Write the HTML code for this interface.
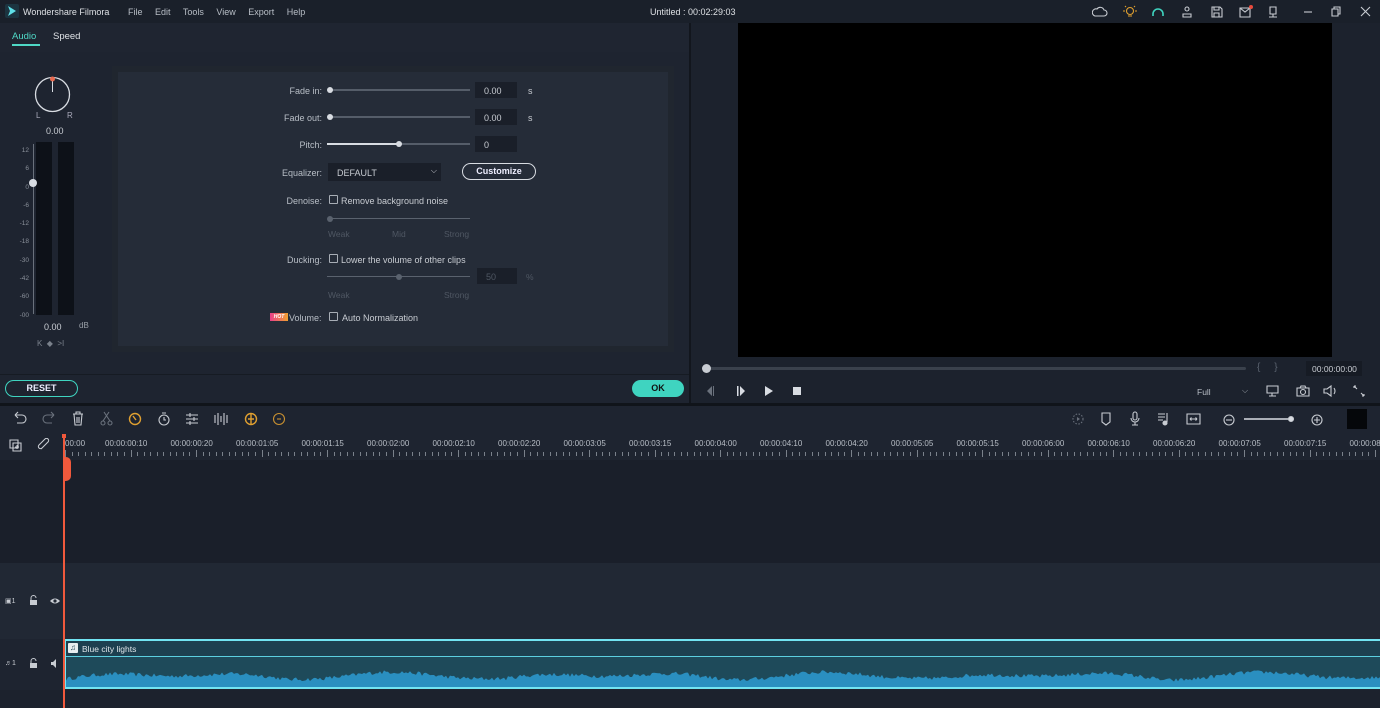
<!DOCTYPE html>
<html><head><meta charset="utf-8"><style>
*{margin:0;padding:0;box-sizing:border-box}
body{width:1380px;height:708px;overflow:hidden;background:#1c222d;font-family:"Liberation Sans",sans-serif;color:#c8ccd2;position:relative;font-size:9px}
.a{position:absolute}
.lbl{position:absolute;text-align:right;width:120px;font-size:9px;color:#b8bec6}
.trk{position:absolute;height:2px;background:#555d69}
.knob{position:absolute;width:6px;height:6px;border-radius:50%;background:#d8dce2}
.box{position:absolute;background:#1a1f29;height:16px;font-size:9px;color:#c8ccd2;padding:4px 0 0 9px}
.cb{position:absolute;width:9px;height:9px;border:1px solid #a8aeb6;border-radius:1px}
.dim{color:#4f5763}
svg{position:absolute}
</style></head><body>
<!-- title bar -->
<div class="a" style="left:0;top:0;width:1380px;height:23px;background:#1a202a"></div>
<svg style="left:5px;top:4px" width="14" height="14"><rect width="14" height="14" rx="2" fill="#1c3440"/><path d="M3 2 L11 7 L3 12 L5 7Z" fill="#5fe0e8"/></svg>
<div class="a" style="left:23px;top:7px;font-size:9px;color:#dde0e4">Wondershare Filmora</div>
<div class="a" style="left:128px;top:7px;font-size:9px;color:#b8bec6;word-spacing:10px">File Edit Tools View Export Help</div>
<div class="a" style="left:650px;top:7px;font-size:9px;color:#dde0e4">Untitled : 00:02:29:03</div>
<svg style="left:1092px;top:5px" width="290" height="14" fill="none" stroke="#c8ccd2" stroke-width="1.1">
<path d="M3 11h9a3 3 0 0 0 0-6 4 4 0 0 0-7-1 3 3 0 0 0-2 7z"/>
<g stroke="#e0a030"><circle cx="38" cy="6" r="3.5"/><path d="M36 11h4M33 6h-2M45 6h-2M34 2l-1-1M42 2l1-1"/></g>
<path stroke="#3fd4c0" stroke-width="1.6" d="M61 9a5 5 0 1 1 10 0M61 9v2M71 9v2"/>
<circle cx="95" cy="4" r="2"/><path d="M91 12v-3h8v3z"/>
<path d="M120 2h8l2 2v8h-10zM122 2v3h5V2M122 12v-4h5v4"/>
<path d="M148 3h10v9h-10zM148 3l5 4 5-4"/><circle cx="159" cy="2" r="2" fill="#e84a3c" stroke="none"/>
<path d="M178 2h6v7h-6zM181 9v3M177 12h8"/>
<path d="M212 7h8"/><path d="M240 4h6v7h-6zM242 4V2h6v7h-2"/><path d="M269 2l9 9M278 2l-9 9"/>
</svg>
<!-- left panel -->
<div class="a" style="left:0;top:23px;width:689px;height:29px;background:#1f2531"></div>
<div class="a" style="left:12px;top:31px;font-size:9.5px;color:#4fd8c6">Audio</div>
<div class="a" style="left:12px;top:44px;width:28px;height:2px;background:#4fd8c6"></div>
<div class="a" style="left:53px;top:31px;font-size:9.5px;color:#dde0e4">Speed</div>
<div class="a" style="left:0;top:52px;width:689px;height:322px;background:#1e2430"></div>
<div class="a" style="left:112px;top:66px;width:562px;height:286px;background:#20262f"></div>
<div class="a" style="left:118px;top:72px;width:550px;height:274px;background:#252c38"></div>
<!-- pan knob -->
<svg style="left:33px;top:75px" width="40" height="45"><circle cx="19.5" cy="19.5" r="17" fill="none" stroke="#d8dce2" stroke-width="1.3"/><path d="M19.5 3v14" stroke="#d8dce2"/><circle cx="19.5" cy="4" r="2.5" fill="#e86a50"/></svg>
<div class="a" style="left:36px;top:111px;font-size:8px;color:#aab">L</div>
<div class="a" style="left:67px;top:111px;font-size:8px;color:#aab">R</div>
<div class="a" style="left:46px;top:126px;font-size:9px;color:#c8ccd2">0.00</div>
<div class="a" style="left:36px;top:142px;width:16px;height:173px;background:#0d1118"></div>
<div class="a" style="left:58px;top:142px;width:16px;height:173px;background:#0d1118"></div>
<div class="a" style="left:33px;top:144px;width:1px;height:170px;background:#6a717c"></div>
<div class="a" style="left:29px;top:179px;width:8px;height:8px;border-radius:50%;background:#d8dce2"></div>
<div class="a" style="left:12px;top:142px;width:17px;font-size:6.5px;color:#8a909a;text-align:right;line-height:18.3px">12<br>6<br>0<br>-6<br>-12<br>-18<br>-30<br>-42<br>-60<br>-00</div>
<div class="a" style="left:44px;top:322px;font-size:9px">0.00</div>
<div class="a" style="left:79px;top:321px;font-size:8px;color:#9aa0a8">dB</div>
<div class="a" style="left:37px;top:339px;font-size:8px;color:#7a818b">K &nbsp;◆ &nbsp;&gt;I</div>
<!-- controls -->
<div class="lbl" style="left:202px;top:86px">Fade in:</div>
<div class="trk" style="left:329px;top:89px;width:141px"></div><div class="knob" style="left:327px;top:87px"></div>
<div class="box" style="left:475px;top:82px;width:42px">0.00</div><div class="a" style="left:528px;top:86px;font-size:9px">s</div>
<div class="lbl" style="left:202px;top:113px">Fade out:</div>
<div class="trk" style="left:329px;top:116px;width:141px"></div><div class="knob" style="left:327px;top:114px"></div>
<div class="box" style="left:475px;top:109px;width:42px">0.00</div><div class="a" style="left:528px;top:113px;font-size:9px">s</div>
<div class="lbl" style="left:202px;top:140px">Pitch:</div>
<div class="trk" style="left:327px;top:143px;width:143px"></div><div class="a" style="left:327px;top:143px;width:72px;height:2px;background:#d8dce2"></div><div class="knob" style="left:396px;top:141px"></div>
<div class="box" style="left:475px;top:136px;width:42px">0</div>
<div class="lbl" style="left:202px;top:168px">Equalizer:</div>
<div class="box" style="left:328px;top:163px;width:113px;height:18px;padding-top:5px">DEFAULT<span style="position:absolute;right:4px;top:3px;font-size:8px">⌵</span></div>
<div class="a" style="left:462px;top:163px;width:74px;height:17px;border:1.5px solid #d8dce2;border-radius:9px;font-size:9px;font-weight:bold;color:#eef;text-align:center;line-height:15px">Customize</div>
<div class="lbl" style="left:202px;top:196px">Denoise:</div>
<div class="cb" style="left:329px;top:195px"></div><div class="a" style="left:341px;top:196px;font-size:9px">Remove background noise</div>
<div class="trk" style="left:329px;top:218px;width:141px;height:1px;background:#5a626e"></div><div class="knob" style="left:327px;top:216px;background:#5a626e"></div>
<div class="a dim" style="left:328px;top:229px;font-size:8.5px">Weak</div><div class="a dim" style="left:392px;top:229px;font-size:8.5px">Mid</div><div class="a dim" style="left:444px;top:229px;font-size:8.5px">Strong</div>
<div class="lbl" style="left:202px;top:255px">Ducking:</div>
<div class="cb" style="left:329px;top:254px"></div><div class="a" style="left:341px;top:255px;font-size:9px">Lower the volume of other clips</div>
<div class="trk" style="left:327px;top:276px;width:143px;height:1px;background:#5a626e"></div><div class="knob" style="left:396px;top:274px;background:#5a626e"></div>
<div class="box dim" style="left:477px;top:268px;width:40px;color:#4f5763">50</div><div class="a dim" style="left:526px;top:272px;font-size:8.5px">%</div>
<div class="a dim" style="left:328px;top:290px;font-size:8.5px">Weak</div><div class="a dim" style="left:444px;top:290px;font-size:8.5px">Strong</div>
<div class="a" style="left:270px;top:313px;width:18px;height:8px;background:linear-gradient(90deg,#e8408a,#f0a030);font-size:5px;color:#fff;font-weight:bold;text-align:center;line-height:8px;font-style:italic">HOT</div>
<div class="a" style="left:289px;top:313px;font-size:9px;color:#b8bec6">Volume:</div>
<div class="cb" style="left:329px;top:312px"></div><div class="a" style="left:342px;top:313px;font-size:9px">Auto Normalization</div>
<!-- bottom buttons -->
<div class="a" style="left:0;top:374px;width:689px;height:29px;background:#1e2430;border-top:1px solid #161b23"></div>
<div class="a" style="left:5px;top:380px;width:73px;height:17px;border:1.5px solid #3fd4c0;border-radius:9px;font-size:9px;font-weight:bold;color:#eef;text-align:center;line-height:14px">RESET</div>
<div class="a" style="left:632px;top:380px;width:52px;height:17px;background:#3fd4c0;border-radius:9px;font-size:9px;font-weight:bold;color:#111;text-align:center;line-height:17px">OK</div>
<!-- preview -->
<div class="a" style="left:689px;top:23px;width:2px;height:380px;background:#12161d"></div>
<div class="a" style="left:691px;top:23px;width:689px;height:380px;background:#1c222d"></div>
<div class="a" style="left:738px;top:23px;width:594px;height:334px;background:#000"></div>
<div class="a" style="left:704px;top:367px;width:542px;height:3px;background:#3a414c;border-radius:2px"></div>
<div class="a" style="left:702px;top:364px;width:9px;height:9px;border-radius:50%;background:#c8ccd2"></div>
<div class="a" style="left:1257px;top:362px;font-size:10px;color:#5a626e">{ &nbsp; &nbsp; }</div>
<div class="a" style="left:1306px;top:361px;width:56px;height:15px;background:#161b24;font-size:8.5px;padding:3px 0 0 6px;color:#c8ccd2">00:00:00:00</div>
<svg style="left:704px;top:385px" width="100" height="12" fill="#d8dce2"><path d="M8 1L3 6l5 5z M9 1h1v10h-1z" fill="#6a717c"/><path d="M33 1h1.5v10H33zM36 1l5 5-5 5z"/><path d="M61 1l8 5-8 5z"/><rect x="89" y="2" width="8" height="8"/></svg>
<div class="a" style="left:1197px;top:387px;font-size:8.5px;color:#b8bec6">Full</div><div class="a" style="left:1242px;top:386px;font-size:8px;color:#9aa0a8">⌵</div>
<svg style="left:1266px;top:384px" width="104" height="14" fill="none" stroke="#c8ccd2" stroke-width="1.1"><path d="M1 2h11v7H1zM6 9v3M3 12h7"/><path d="M31 4h12v8H31zM34 4l1-2h4l1 2"/><circle cx="37" cy="8" r="2.5"/><path d="M58 5h3l4-3v10l-4-3h-3zM68 4q2 3 0 6"/><path d="M88 2l3 3M88 2h2M88 2v2M98 12l-3-3M98 12h-2M98 12v-2"/></svg>
<!-- timeline toolbar -->
<div class="a" style="left:0;top:403px;width:1380px;height:3px;background:#10141a"></div>
<div class="a" style="left:0;top:406px;width:1380px;height:28px;background:#1e2430"></div>
<svg style="left:12px;top:411px" width="280" height="16" fill="none" stroke="#c8ccd2" stroke-width="1.1">
<path d="M3 4h7a4 4 0 0 1 0 8H5M3 4l3-3M3 4l3 3"/>
<path stroke="#6a717c" d="M42 4h-7a4 4 0 0 0 0 8h5M42 4l-3-3M42 4l-3 3"/>
<path d="M61 3h10M64 3V1h4v2M62 3l1 11h6l1-11M65 6v6M67 6v6"/>
<g stroke="#6a717c"><circle cx="91" cy="12" r="2"/><circle cx="98" cy="12" r="2"/><path d="M91 10L97 1M98 10L92 1"/></g>
<g stroke="#e0a030" stroke-width="1.4"><circle cx="123" cy="8" r="5.5"/><path d="M121 5l3 4"/></g>
<circle cx="152" cy="9" r="5"/><path d="M150 2h4M152 6v3h2"/>
<path d="M174 4h12M174 8h12M174 12h12M178 2v4M182 6v4M178 10v4"/>
<path d="M203 4v8M206 2v12M209 5v6M212 2v12M215 4v8"/>
<g stroke="#e0a030" stroke-width="1.4"><circle cx="239" cy="8" r="5.5"/><path d="M239 3v10M236 8h6"/></g>
<g stroke="#c89030"><circle cx="267" cy="8" r="5.5"/><path d="M265 8h4"/></g>
</svg>
<svg style="left:1070px;top:411px" width="300" height="16" fill="none" stroke="#c8ccd2" stroke-width="1.1">
<circle cx="8" cy="8" r="5" stroke="#6a717c" stroke-dasharray="1.5 1.5"/><path d="M7 6l3 2-3 2z" fill="#6a717c" stroke="none"/>
<path d="M32 2h8v9l-4 3-4-3z"/>
<rect x="63" y="1" width="4" height="8" rx="2"/><path d="M61 7a4 4 0 0 0 8 0M65 11v3M62 14h6"/>
<path d="M88 3h7M88 6h7M88 9h5M97 2v9" /><circle cx="95" cy="12" r="2" fill="#c8ccd2"/>
<path d="M117 3h13v10h-13zM120 8h7M120 8l1.5-1.5M120 8l1.5 1.5M127 8l-1.5-1.5M127 8l-1.5 1.5"/>
<circle cx="159" cy="9" r="5"/><path d="M156 9h6"/>
<path d="M174 8h48" stroke="#d8dce2" stroke-width="1.5"/><circle cx="221" cy="8" r="2.5" fill="#d8dce2"/>
<circle cx="247" cy="9" r="5"/><path d="M244 9h6M247 6v6"/>
</svg>
<div class="a" style="left:1347px;top:409px;width:20px;height:20px;background:#05070a"></div>
<!-- ruler -->
<div class="a" style="left:0;top:434px;width:1380px;height:26px;background:#1e2430"></div>
<svg style="left:9px;top:438px" width="45" height="14" fill="none" stroke="#c8ccd2" stroke-width="1.1"><path d="M1 2h8v8H1zM4 5h8v8H4zM8 7v4M6 9h4"/><path d="M32 11l7-7a2 2 0 0 0-3-3l-6 6a2 2 0 0 0 3 3l5-5"/></svg>
<div id="ruler"></div>
<!-- tracks -->
<div class="a" style="left:0;top:460px;width:1380px;height:103px;background:#1a1f2a"></div>
<div class="a" style="left:0;top:563px;width:1380px;height:76px;background:#212834"></div>
<div class="a" style="left:0;top:639px;width:1380px;height:69px;background:#1e2430"></div>
<div class="a" style="left:0;top:690px;width:1380px;height:18px;background:#1c222d"></div>
<div class="a" style="left:5px;top:597px;font-size:7px;color:#c8ccd2">▣1</div>
<div class="a" style="left:5px;top:660px;font-size:7px;color:#c8ccd2">♬1</div>
<svg style="left:28px;top:594px" width="34" height="76" fill="#c8ccd2"><path d="M3 6V4a2.5 2.5 0 0 1 5 0" stroke="#c8ccd2" fill="none"/><rect x="2" y="6" width="7" height="5"/><path d="M22 7q5-5 10 0q-5 5-10 0z"/><circle cx="27" cy="7" r="1.6" fill="#212834"/>
<path d="M3 69V67a2.5 2.5 0 0 1 5 0" stroke="#c8ccd2" fill="none"/><rect x="2" y="69" width="7" height="5"/><path d="M23 68h2l3-3v9l-3-3h-2z"/></svg>
<!-- clip -->
<div class="a" style="left:64px;top:639px;width:1316px;height:50px;border:2px solid #72e4f2;border-right:none;background:#1e4a5a"></div>
<div class="a" style="left:66px;top:641px;width:1314px;height:16px;background:#1d4050;border-bottom:1.5px solid #5ccfe0"></div>
<div class="a" style="left:68px;top:643px;width:10px;height:10px;background:#e8eef0;border-radius:1px;font-size:8px;color:#1d4050;text-align:center;line-height:10px">♫</div>
<div class="a" style="left:82px;top:644px;font-size:8.5px;color:#e0e6ea">Blue city lights</div>
<svg id="wave" style="left:66px;top:658px" width="1314" height="29"></svg>
<!-- playhead -->
<div class="a" style="left:63px;top:434px;width:2px;height:274px;background:#f0593c"></div>
<div class="a" style="left:62px;top:434px;width:4px;height:4px;background:#f0593c"></div>
<div class="a" style="left:63px;top:457px;width:8px;height:24px;background:#f0593c;border-radius:0 5px 5px 0"></div>
<script>
var labels=["00:00","00:00:00:10","00:00:00:20","00:00:01:05","00:00:01:15","00:00:02:00","00:00:02:10","00:00:02:20","00:00:03:05","00:00:03:15","00:00:04:00","00:00:04:10","00:00:04:20","00:00:05:05","00:00:05:15","00:00:06:00","00:00:06:10","00:00:06:20","00:00:07:05","00:00:07:15","00:00:08:00"];
var h='';
for(var i=0;i<labels.length;i++){var x=(i==0?65:39.5+i*65.5);h+='<div class="a" style="left:'+x+'px;top:439px;font-size:8px;color:#b8bec6">'+labels[i]+'</div>';}
for(var j=0;j<220;j++){var x=65+j*6.55;var big=j%10==0;h+='<div class="a" style="left:'+x+'px;top:'+(big?450:452)+'px;width:1px;height:'+(big?7:4)+'px;background:#7a818b"></div>';}
document.getElementById('ruler').innerHTML=h;
var s=12345;function r(){s=(s*16807)%2147483647;return s/2147483647;}
var d='M0 29';for(var k=0;k<=1314;k+=2){var env=6+5*Math.abs(Math.sin(k/70))+2*Math.sin(k/23);var y=29-Math.max(3,env+r()*4);d+=' L'+k+' '+y.toFixed(1);}d+=' L1314 29Z';
document.getElementById('wave').innerHTML='<path d="'+d+'" fill="#2a8fc0"/>';
</script>
</body></html>
